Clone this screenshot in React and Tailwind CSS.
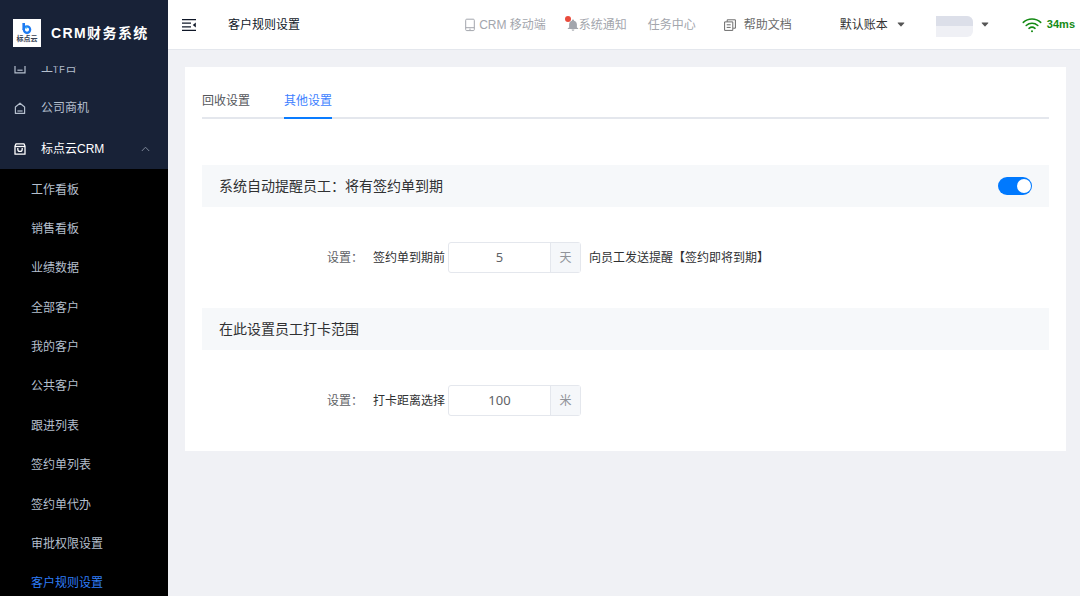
import React, { useState } from 'react';

const submenuItems = [
    '工作看板',
    '销售看板',
    '业绩数据',
    '全部客户',
    '我的客户',
    '公共客户',
    '跟进列表',
    '签约单列表',
    '签约单代办',
    '审批权限设置',
    '客户规则设置',
];

// --- Icons ---
const Caret = ({ className }) => (
    <svg viewBox="0 0 8 5" className={`h-[5px] w-2 ${className || ''}`} fill="currentColor" aria-hidden="true">
        <path d="M1.2 0.4h5.6c.5 0 .7.5.4.8L4.4 4.3a.5.5 0 0 1-.8 0L.8 1.2C.5.9.7.4 1.2.4z" />
    </svg>
);

const InboxIcon = () => (
    <svg viewBox="0 0 14 14" className="size-[14px] shrink-0" fill="none" stroke="currentColor" strokeWidth="1.2" aria-hidden="true">
        <path d="M2 2.6h10v9.3H2z" />
        <path d="M4.4 9.2h5.2" />
    </svg>
);

const HomeIcon = () => (
    <svg viewBox="0 0 14 14" className="size-[14px] shrink-0" fill="none" stroke="currentColor" strokeWidth="1.2" strokeLinejoin="round" aria-hidden="true">
        <path d="M2.4 12.4V6L7 2.2 11.6 6v6.4z" />
        <path d="M4.4 10h5.2" />
    </svg>
);

const BagIcon = () => (
    <svg viewBox="0 0 14 14" className="size-[14px] shrink-0" fill="none" stroke="currentColor" strokeWidth="1.3" strokeLinejoin="round" aria-hidden="true">
        <path d="M2.9 1.9h8.2l.9 2.4v7.9H2V4.3z" />
        <path d="M2 4.5h10" />
        <path d="M4.8 6v1.2a2.2 2.2 0 0 0 4.4 0V6" />
    </svg>
);

const CollapseIcon = () => (
    <svg viewBox="0 0 14 14" className="size-[14px]" fill="none" stroke="currentColor" strokeWidth="1.3" aria-hidden="true">
        <path d="M0 1.6h14M0 5.2h9M0 8.8h9M0 12.4h14" />
        <path d="M13.8 4.6v4.8L10.8 7z" fill="currentColor" stroke="none" />
    </svg>
);

const PhoneIcon = () => (
    <svg viewBox="0 0 10 14" className="h-[14px] w-[10px]" fill="none" stroke="currentColor" aria-hidden="true">
        <rect x="0.7" y="1.2" width="8.6" height="11.4" rx="1" />
        <path d="M0.7 9.7h8.6M4.3 11.2h1.4" />
    </svg>
);

const BellIcon = () => (
    <svg viewBox="0 0 12 12" className="size-3" fill="currentColor" aria-hidden="true">
        <path d="M6 .4c.6 0 1 .4 1 1v.3c1.7.4 2.9 1.9 2.9 3.7v3l1.3.9v.7H.8v-.7l1.3-.9v-3C2.1 3.600 3.300 2.100 5 1.700v-.3c0-.6.4-1 1-1zM4.600 10.600h2.800a1.400 1.200 0 0 1-2.800 0z" />
    </svg>
);

const DocIcon = () => (
    <svg viewBox="0 0 12 12" className="size-3" fill="none" stroke="currentColor" aria-hidden="true">
        <path d="M3.2 2.8V.8h8.200v8.400H9.200" />
        <path d="M.6 2.900h8.200v8.500H.6zM2.700 5.800h4M2.700 8.400h4" />
    </svg>
);

const WifiIcon = () => (
    <svg viewBox="0 0 20 16" className="h-4 w-5" fill="none" stroke="currentColor" strokeWidth="1.6" strokeLinecap="round" aria-hidden="true">
        <path d="M1.300 5.400C6.100.8 13.900.8 18.700 5.400" />
        <path d="M4.200 8.500c3.300-3 8.300-3 11.600 0" />
        <path d="M7 11.300c1.800-1.500 4.200-1.500 6 0" />
        <circle cx="10" cy="14.200" r="1" fill="currentColor" stroke="none" />
    </svg>
);

// --- Sidebar ---
const Logo = () => (
    <div className="flex size-7 shrink-0 flex-col items-center justify-end gap-px bg-white pb-1">
        <svg viewBox="0 0 10 11" className="h-[11px] w-[10px]" fill="none" aria-hidden="true">
            <path d="M1.700 0v7" stroke="#1e7bf2" strokeWidth="2.600" />
            <circle cx="5" cy="6.600" r="3.200" stroke="#1e7bf2" strokeWidth="2.200" />
            <circle cx="4.400" cy="4.600" r="1.100" fill="#39b7f5" />
        </svg>
        <span className="text-[7px] leading-[8px] font-bold text-gray-700">标点云</span>
    </div>
);

const NavLink = ({ icon, label }) => (
    <a href="#" className="flex h-10 shrink-0 items-center gap-[14px] pl-[13px] text-[#b4bfcd]">
        {icon}
        <span>{label}</span>
    </a>
);

const Sidebar = ({ current, onSelect }) => {
    const [open, setOpen] = useState(true);

    return (
        <aside className="flex w-[168px] shrink-0 flex-col overflow-hidden bg-[#182237]">
            <div className="flex h-[66px] shrink-0 items-center gap-[10px] pl-[13px]">
                <Logo />
                <h1 className="text-sm font-bold tracking-widest whitespace-nowrap text-white">CRM财务系统</h1>
            </div>
            <nav className="flex-1 overflow-hidden">
                <div className="-mt-[18px] flex flex-col">
                    <NavLink icon={<InboxIcon />} label="工作台" />
                    <NavLink icon={<HomeIcon />} label="公司商机" />
                    <button
                        type="button"
                        aria-expanded={open}
                        onClick={() => setOpen(!open)}
                        className="flex h-[41px] items-center gap-[14px] pr-[18px] pl-[13px] text-white"
                    >
                        <BagIcon />
                        <span>标点云CRM</span>
                        <svg viewBox="0 0 9 6" className="ml-auto h-[6px] w-[9px] text-[#7d8798]" fill="none" stroke="currentColor" aria-hidden="true">
                            <path d="M.8 5 4.500 1.200 8.200 5" />
                        </svg>
                    </button>
                    {open && (
                        <ul className="grid h-[434px] auto-rows-fr bg-black pt-px">
                            {submenuItems.map((item) => (
                                <li key={item}>
                                    <a
                                        href="#"
                                        onClick={() => onSelect(item)}
                                        className={`flex h-full items-center pl-[31px] ${item === current ? 'text-[#2f7df6]' : 'text-[#b4bfcd]'}`}
                                    >
                                        {item}
                                    </a>
                                </li>
                            ))}
                        </ul>
                    )}
                </div>
            </nav>
        </aside>
    );
};

// --- Top bar ---
const TopBar = ({ title }) => (
    <header className="flex h-[50px] shrink-0 items-center border-b border-[#e4e7ed] bg-white pr-[5px] pl-[14px] whitespace-nowrap">
        <button type="button" aria-label="菜单" className="text-gray-900">
            <CollapseIcon />
        </button>
        <h2 className="ml-8 text-gray-900">{title}</h2>
        <div className="ml-auto flex items-center text-[#a3a6ad]">
            <a href="#" className="flex items-center gap-1">
                <PhoneIcon />
                CRM 移动端
            </a>
            <a href="#" className="ml-[21px] flex items-center">
                <span className="relative">
                    <BellIcon />
                    <span className="absolute -top-[3px] -left-[2px] size-[6px] rounded-full bg-[#e94b3c]" />
                </span>
                系统通知
            </a>
            <a href="#" className="ml-[21px]">任务中心</a>
            <a href="#" className="ml-7 flex items-center gap-2 text-[#6b6b6b]">
                <DocIcon />
                帮助文档
            </a>
            <div className="relative ml-12 flex items-center text-[#333]">
                <select aria-label="账本" className="appearance-none bg-transparent pr-4">
                    <option>默认账本</option>
                </select>
                <Caret className="pointer-events-none absolute right-0 text-[#555]" />
            </div>
            <button type="button" aria-label="用户" className="ml-[31px] flex items-center gap-2 text-[#555]">
                <span className="mt-1 h-[21px] w-[37px] overflow-hidden rounded-r-md bg-[#eff0f5]">
                    <span className="block h-[10px] bg-[#dcdfe9]" />
                </span>
                <Caret />
            </button>
            <div className="ml-[33px] flex items-center gap-[5px] text-[#148a14]">
                <WifiIcon />
                <span className="text-[11px] font-bold">34ms</span>
            </div>
        </div>
    </header>
);

// --- Settings ---
const SectionBar = ({ title, children }) => (
    <div className="flex h-[42px] items-center justify-between bg-[#f6f8fa] px-[17px]">
        <h3 className="text-sm text-[#303133]">{title}</h3>
        {children}
    </div>
);

const NumberRow = ({ id, text, value, onChange, unit, suffix }) => (
    <div className="flex items-center py-[35px] text-[#303133]">
        <span className="w-[171px] shrink-0 pr-[10px] text-right text-[#606266]">设置：</span>
        <label htmlFor={id} className="mr-[3px]">{text}</label>
        <div className="flex h-[31px] w-[133px] rounded-[3px] border border-[#e4e7ed]">
            <input
                id={id}
                type="text"
                inputMode="numeric"
                value={value}
                onChange={(e) => onChange(e.target.value)}
                className="min-w-0 flex-1 text-center font-['Noto_Sans',sans-serif] text-[13px] text-[#606266] outline-none"
            />
            <span className="flex w-[30px] items-center justify-center border-l border-[#e4e7ed] bg-[#f5f7fa] text-[#909399]">{unit}</span>
        </div>
        {suffix && <span className="ml-2">{suffix}</span>}
    </div>
);

const RuleSettings = () => {
    const [tab, setTab] = useState('其他设置');
    const [remind, setRemind] = useState(true);
    const [days, setDays] = useState('5');
    const [distance, setDistance] = useState('100');

    return (
        <div className="bg-white px-[17px] pt-[18px]">
            <div role="tablist" className="flex gap-[34px] border-b-2 border-[#e4e7ed]">
                {['回收设置', '其他设置'].map((name) => (
                    <button
                        key={name}
                        type="button"
                        role="tab"
                        aria-selected={tab === name}
                        onClick={() => setTab(name)}
                        className={`-mb-[2px] h-[34px] border-b-2 ${tab === name ? 'border-[#0a7cff] text-[#3d7fff]' : 'border-transparent text-[#55575c]'}`}
                    >
                        {name}
                    </button>
                ))}
            </div>
            <div className="mt-[46px]">
                <SectionBar title="系统自动提醒员工：将有签约单到期">
                    <input
                        type="checkbox"
                        role="switch"
                        aria-label="系统自动提醒员工"
                        checked={remind}
                        onChange={(e) => setRemind(e.target.checked)}
                        className="flex h-[18px] w-[34px] cursor-pointer appearance-none items-center rounded-full bg-gray-300 px-px before:size-[14px] before:rounded-full before:bg-white checked:justify-end checked:bg-[#0079fe]"
                    />
                </SectionBar>
                <NumberRow
                    id="remind-days"
                    text="签约单到期前"
                    value={days}
                    onChange={setDays}
                    unit="天"
                    suffix="向员工发送提醒【签约即将到期】"
                />
                <SectionBar title="在此设置员工打卡范围" />
                <NumberRow
                    id="clock-distance"
                    text="打卡距离选择"
                    value={distance}
                    onChange={setDistance}
                    unit="米"
                />
            </div>
        </div>
    );
};

const App = () => {
    const [page, setPage] = useState('客户规则设置');

    return (
        <div className="flex h-screen overflow-hidden bg-[#f0f1f5] font-['Liberation_Sans','Noto_Sans_CJK_SC',sans-serif] text-xs">
            <Sidebar current={page} onSelect={setPage} />
            <div className="flex min-w-0 flex-1 flex-col">
                <TopBar title={page} />
                <main className="flex-1 overflow-auto pt-[17px] pr-[14px] pl-[17px]">
                    <RuleSettings />
                </main>
            </div>
        </div>
    );
};

export default App;
